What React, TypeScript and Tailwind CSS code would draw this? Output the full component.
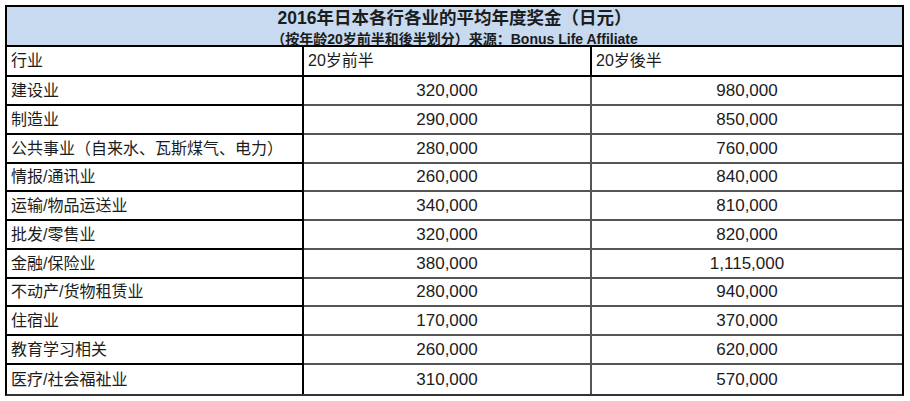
import React from "react";

const rows: [string, string, string][] = [
  ["建设业", "320,000", "980,000"],
  ["制造业", "290,000", "850,000"],
  ["公共事业（自来水、瓦斯煤气、电力）", "280,000", "760,000"],
  ["情报/通讯业", "260,000", "840,000"],
  ["运输/物品运送业", "340,000", "810,000"],
  ["批发/零售业", "320,000", "820,000"],
  ["金融/保险业", "380,000", "1,115,000"],
  ["不动产/货物租赁业", "280,000", "940,000"],
  ["住宿业", "170,000", "370,000"],
  ["教育学习相关", "260,000", "620,000"],
  ["医疗/社会福祉业", "310,000", "570,000"],
];

const cjk = { fontFamily: '"Liberation Sans", "Noto Sans CJK SC", sans-serif' };

export default function App() {
  return (
    <div className="w-[910px] h-[401px] bg-white overflow-hidden text-[#1c1c1c]" style={cjk}>
      <div className="ml-[5px] mt-[5px] w-[899px] border-2 border-black border-b-[#333]">
        <div className="h-[40px] bg-[#c8daf0] border-b-2 border-black flex flex-col items-center">
          <div className="text-[17.5px] font-bold leading-[22px]">2016年日本各行各业的平均年度奖金（日元）</div>
          <div className="text-[14px] font-bold leading-[16px] mt-[2px]">（按年龄20岁前半和後半划分）来源：Bonus Life Affiliate</div>
        </div>
        <div className="flex h-[30px] border-b-2 border-black text-[16px]">
          <div className="w-[297px] border-r-2 border-black flex items-center pl-[4px]">行业</div>
          <div className="w-[288px] border-r-2 border-black flex items-center pl-[4px]">20岁前半</div>
          <div className="flex-1 flex items-center pl-[4px]">20岁後半</div>
        </div>
        {rows.map((r, i) => (
          <div key={i} className={`flex ${i % 4 === 3 ? "h-[28px]" : "h-[29px]"}`}>
            <div
              className={`w-[297px] border-r-2 border-black flex items-center pl-[4px] text-[16px] ${
                i < rows.length - 1 ? "border-b-2 border-b-black" : ""
              }`}
            >
              {r[0]}
            </div>
            <div
              className={`w-[288px] border-r-2 border-[#555] flex items-center justify-center text-[17px] ${
                i < rows.length - 1 ? "border-b-2 border-b-[#555]" : ""
              }`}
            >
              {r[1]}
            </div>
            <div
              className={`flex-1 flex items-center justify-center text-[17px] ${
                i < rows.length - 1 ? "border-b-2 border-b-[#555]" : ""
              }`}
            >
              {r[2]}
            </div>
          </div>
        ))}
      </div>
    </div>
  );
}
